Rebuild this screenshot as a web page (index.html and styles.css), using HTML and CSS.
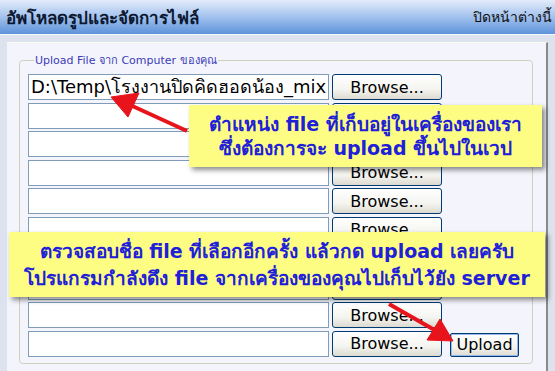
FILE: index.html
```html
<!DOCTYPE html>
<html>
<head>
    <title>อัพโหลดรูปและจัดการไฟล์</title>
    <link rel="stylesheet" href="styles.css">
</head>
<body>
    <div class="topbar">
        <h1 class="title">อัพโหลดรูปและจัดการไฟล์</h1>
        <a class="close-link" href="#">ปิดหน้าต่างนี้</a>
    </div>
    <div class="panel">
        <fieldset class="upload-box">
            <legend>Upload File จาก Computer ของคุณ</legend>
            <div class="file-grid">
                <div class="file-field">D:\Temp\โรงงานปิดคิดฮอดน้อง_mix</div><button class="browse">Browse...</button><span></span>
                <div class="file-field"></div><button class="browse">Browse...</button><span></span>
                <div class="file-field"></div><button class="browse">Browse...</button><span></span>
                <div class="file-field"></div><button class="browse">Browse...</button><span></span>
                <div class="file-field"></div><button class="browse">Browse...</button><span></span>
                <div class="file-field"></div><button class="browse">Browse...</button><span></span>
                <div class="file-field"></div><button class="browse">Browse...</button><span></span>
                <div class="file-field"></div><button class="browse">Browse...</button><span></span>
                <div class="file-field"></div><button class="browse">Browse...</button><span></span>
                <div class="file-field"></div><button class="browse">Browse...</button><button class="upload-btn">Upload</button>
            </div>
        </fieldset>
    </div>

    <!-- คำอธิบาย -->
    <div class="note note-top">ตำแหน่ง file ที่เก็บอยู่ในเครื่องของเรา<br>ซึ่งต้องการจะ upload ขึ้นไปในเวป</div>
    <div class="note note-bottom">ตรวจสอบชื่อ file ที่เลือกอีกครั้ง แล้วกด upload เลยครับ<br>โปรแกรมกำลังดึง file จากเครื่องของคุณไปเก็บไว้ยัง server</div>

    <svg class="arrows" width="555" height="371" viewBox="0 0 555 371">
        <g fill="#e8141c" stroke="#e8141c">
            <line x1="187" y1="131" x2="128" y2="104" stroke-width="4"/>
            <polygon points="111,97 139,93 128,117" stroke-width="1"/>
            <line x1="389" y1="304" x2="438" y2="332" stroke-width="4"/>
            <polygon points="453,341 427,340 440,319" stroke-width="1"/>
        </g>
    </svg>
</body>
</html>
```

FILE: styles.css
```css
body {
    margin: 0;
    width: 555px;
    height: 371px;
    overflow: hidden;
    position: relative;
    background-color: #dde3ee;
    font-family: Tahoma, "DejaVu Sans", sans-serif;
}
.topbar {
    height: 34px;
    display: flex;
    align-items: center;
    justify-content: space-between;
    padding: 0 3px 0 6px;
    background: linear-gradient(#e2ecfb, #a9c6ef 45%, #5c93da);
    border-bottom: 1px solid #f4f7fd;
}
.title {
    margin: 0;
    font-size: 17px;
    font-weight: bold;
    color: #0c1830;
}
.close-link {
    font-size: 14px;
    color: #101010;
    text-decoration: none;
}
.panel {
    margin: 7px 7px 0 7px;
    padding: 8px 13px 8px 12px;
    background-color: #f4f5fc;
    border-top: 1px solid #fbfbf2;
    border-right: 2px solid #8a8a8a;
    height: 340px;
    box-sizing: border-box;
}
.upload-box {
    margin: 0;
    padding: 5px 8px 6px 8px;
    border: 1px solid #d0d0bf;
    border-radius: 4px;
}
.upload-box legend {
    padding: 0 1px;
    margin-left: 6px;
    font-size: 11px;
    color: #3b3bb8;
}
.file-grid {
    display: grid;
    grid-template-columns: 301px 110px 74px;
    grid-auto-rows: 26px;
    row-gap: 2.5px;
    column-gap: 3px;
}
.file-field {
    background-color: white;
    border: 1px solid #7f9db9;
    font-size: 18px;
    line-height: 24px;
    padding-left: 2px;
    white-space: nowrap;
    overflow: hidden;
    color: black;
}
.browse, .upload-btn {
    font-family: Tahoma, "DejaVu Sans", sans-serif;
    font-size: 16px;
    color: black;
    border: 1px solid #003c74;
    border-radius: 3px;
    background: linear-gradient(#ffffff, #f4f4f0 60%, #dcdad0);
    padding: 0;
}
.upload-btn {
    margin-left: 5px;
    margin-top: 2px;
    height: 24px;
    border-radius: 2px;
    box-shadow: inset 0 0 0 1px #98b8ea;
}
.note {
    position: absolute;
    display: flex;
    align-items: center;
    justify-content: center;
    background-color: #fdfd84;
    color: #2020d8;
    font-weight: bold;
    font-size: 19px;
    text-align: center;
    box-shadow: 3px 3px 5px rgba(0, 0, 0, 0.45);
    box-sizing: border-box;
}
.note-top {
    left: 189px;
    top: 105px;
    width: 353px;
    height: 62px;
    line-height: 24px;
}
.note-bottom {
    left: 9px;
    top: 232px;
    width: 536px;
    height: 65px;
    line-height: 27px;
}
.arrows {
    position: absolute;
    left: 0;
    top: 0;
    pointer-events: none;
}
```
